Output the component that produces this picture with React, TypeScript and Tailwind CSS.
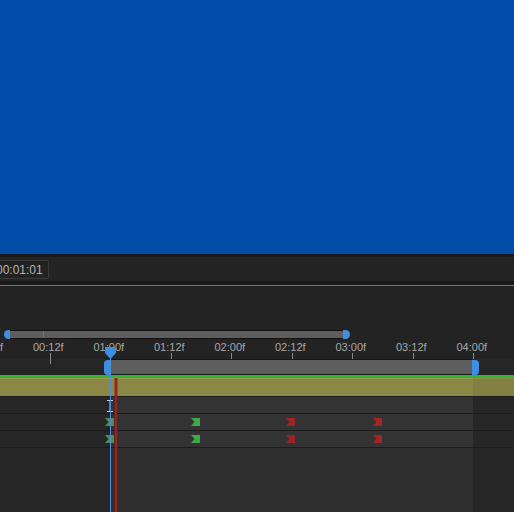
import React from "react";

const labels = ["00:00f", "00:12f", "01:00f", "01:12f", "02:00f", "02:12f", "03:00f", "03:12f", "04:00f"];

const Keyframe = ({ x, color }: { x: number; color: string }) => (
  <svg
    className="absolute top-[3px]"
    style={{ left: x - 5 }}
    width="10"
    height="10"
    viewBox="0 0 10 10"
  >
    <polygon points="0,1 9,1 9,9 0,9 3.5,5" fill={color} />
  </svg>
);

const Row = ({ children, bottom }: { children?: React.ReactNode; bottom?: boolean }) => (
  <div className={`grid grid-cols-[110px_363px_1fr] ${bottom ? "flex-1" : "h-[17px] border-b border-[#1c1c1c]"}`}>
    <div className="bg-[#262626]" />
    <div className={`relative ${bottom ? "bg-[#2f2f2f]" : "bg-[#333333]"}`}>{children}</div>
    <div className="bg-[#262626]" />
  </div>
);

export default function App() {
  return (
    <div className="flex h-[512px] w-[514px] flex-col overflow-hidden bg-[#232323] font-['Liberation_Sans',sans-serif]">
      {/* composition viewer */}
      <div className="h-[254px] shrink-0 bg-[#004ea8]" />

      <div className="relative flex flex-1 flex-col">
        <div className="h-[3px] bg-[#1a1a1a]" />
        <div className="h-[24px] bg-[#242424]">
          <div className="mt-[3px] flex h-[19px] w-[49px] items-center overflow-hidden rounded-r-[2px] border border-l-0 border-[#383838] bg-[#222222]">
            <span className="ml-[-4px] text-[12px] text-[#b4b4b4]">00:01:01</span>
          </div>
        </div>
        <div className="h-[4px] bg-[#1b1b1b]" />
        <div className="h-[1px] bg-[#3b7fd4]" />
        <div className="h-[44px] bg-[#232323]" />

        {/* navigator */}
        <div className="flex h-[9px] pl-[4px]">
          <div className="h-[9px] w-[6px] rounded-l-full bg-[#3d8fe3]" />
          <div className="relative h-[9px] w-[333px] border-y border-[#111111] bg-[#5e5e5e]">
            <div className="absolute left-[33px] top-0 h-full w-[1px] bg-[#4a7fb5]" />
          </div>
          <div className="h-[9px] w-[7px] rounded-r-full bg-[#3d8fe3]" />
        </div>

        {/* ruler */}
        <div className="flex h-[20px] ml-[-27.5px]">
          {labels.map((l) => (
            <div key={l} className="relative w-[60.5px] shrink-0">
              <span className="absolute left-0 top-[2px] text-[11px] leading-[12px] text-[#a8a8a8]">{l}</span>
              <div className="absolute left-[16.5px] top-[14px] h-[6px] w-[1px] bg-[#8a8a8a]" />
            </div>
          ))}
        </div>

        {/* work area */}
        <div className="flex h-[16px] bg-[#262626]">
          <div className="relative ml-[50px] mt-[-1px] h-[6px] w-[1px] bg-[#8a8a8a]" />
          <div className="ml-[53px] h-[15px] w-[6px] self-center rounded-l-[4px] bg-[#3d8fe3]" />
          <div className="h-[16px] w-[362px] border-y border-[#161616] bg-[#5e5e5e]" />
          <div className="h-[15px] w-[7px] self-center rounded-r-[4px] bg-[#3d8fe3]" />
        </div>

        <div className="h-[3px] bg-[#33b434]" />

        {/* layer bar */}
        <div className="grid h-[19px] grid-cols-[473px_1fr] border-b border-[#1c1c1c]">
          <div className="border-t border-[#9a9752] bg-[#8b8846]" />
          <div className="border-t border-[#908d4c] bg-[#817f42]" />
        </div>

        <Row />
        <Row>
          <Keyframe x={0} color="#4f8f4c" />
          <Keyframe x={86} color="#3fa84a" />
          <Keyframe x={181} color="#9c2424" />
          <Keyframe x={268} color="#a32626" />
        </Row>
        <Row>
          <Keyframe x={0} color="#4f8f4c" />
          <Keyframe x={86} color="#3fa84a" />
          <Keyframe x={181} color="#9c2424" />
          <Keyframe x={268} color="#a32626" />
        </Row>
        <Row bottom />

        {/* I-beam cursor */}
        <svg className="absolute left-[106px] top-[146px]" width="8" height="12" viewBox="0 0 8 12">
          <path d="M1 0.5h6M1 11.5h6M4 0.5v11" stroke="#c8c8c8" strokeWidth="1" fill="none" />
        </svg>

        {/* red marker line */}
        <div className="absolute bottom-0 left-[114px] top-[124px] w-[4px] bg-[#7a1c1c]/40" />
        <div className="absolute bottom-0 left-[115px] top-[124px] w-[2px] bg-[#9a2222]" />

        {/* playhead */}
        <div className="absolute bottom-0 left-[110px] top-[96px] w-[1px] bg-[#4f8fd6]" />
        <svg className="absolute left-[104px] top-[93px]" width="13" height="12" viewBox="0 0 13 12">
          <path d="M1 0h11v6l-5.5 6L1 6z" fill="#3d8fe3" />
        </svg>
      </div>
    </div>
  );
}
